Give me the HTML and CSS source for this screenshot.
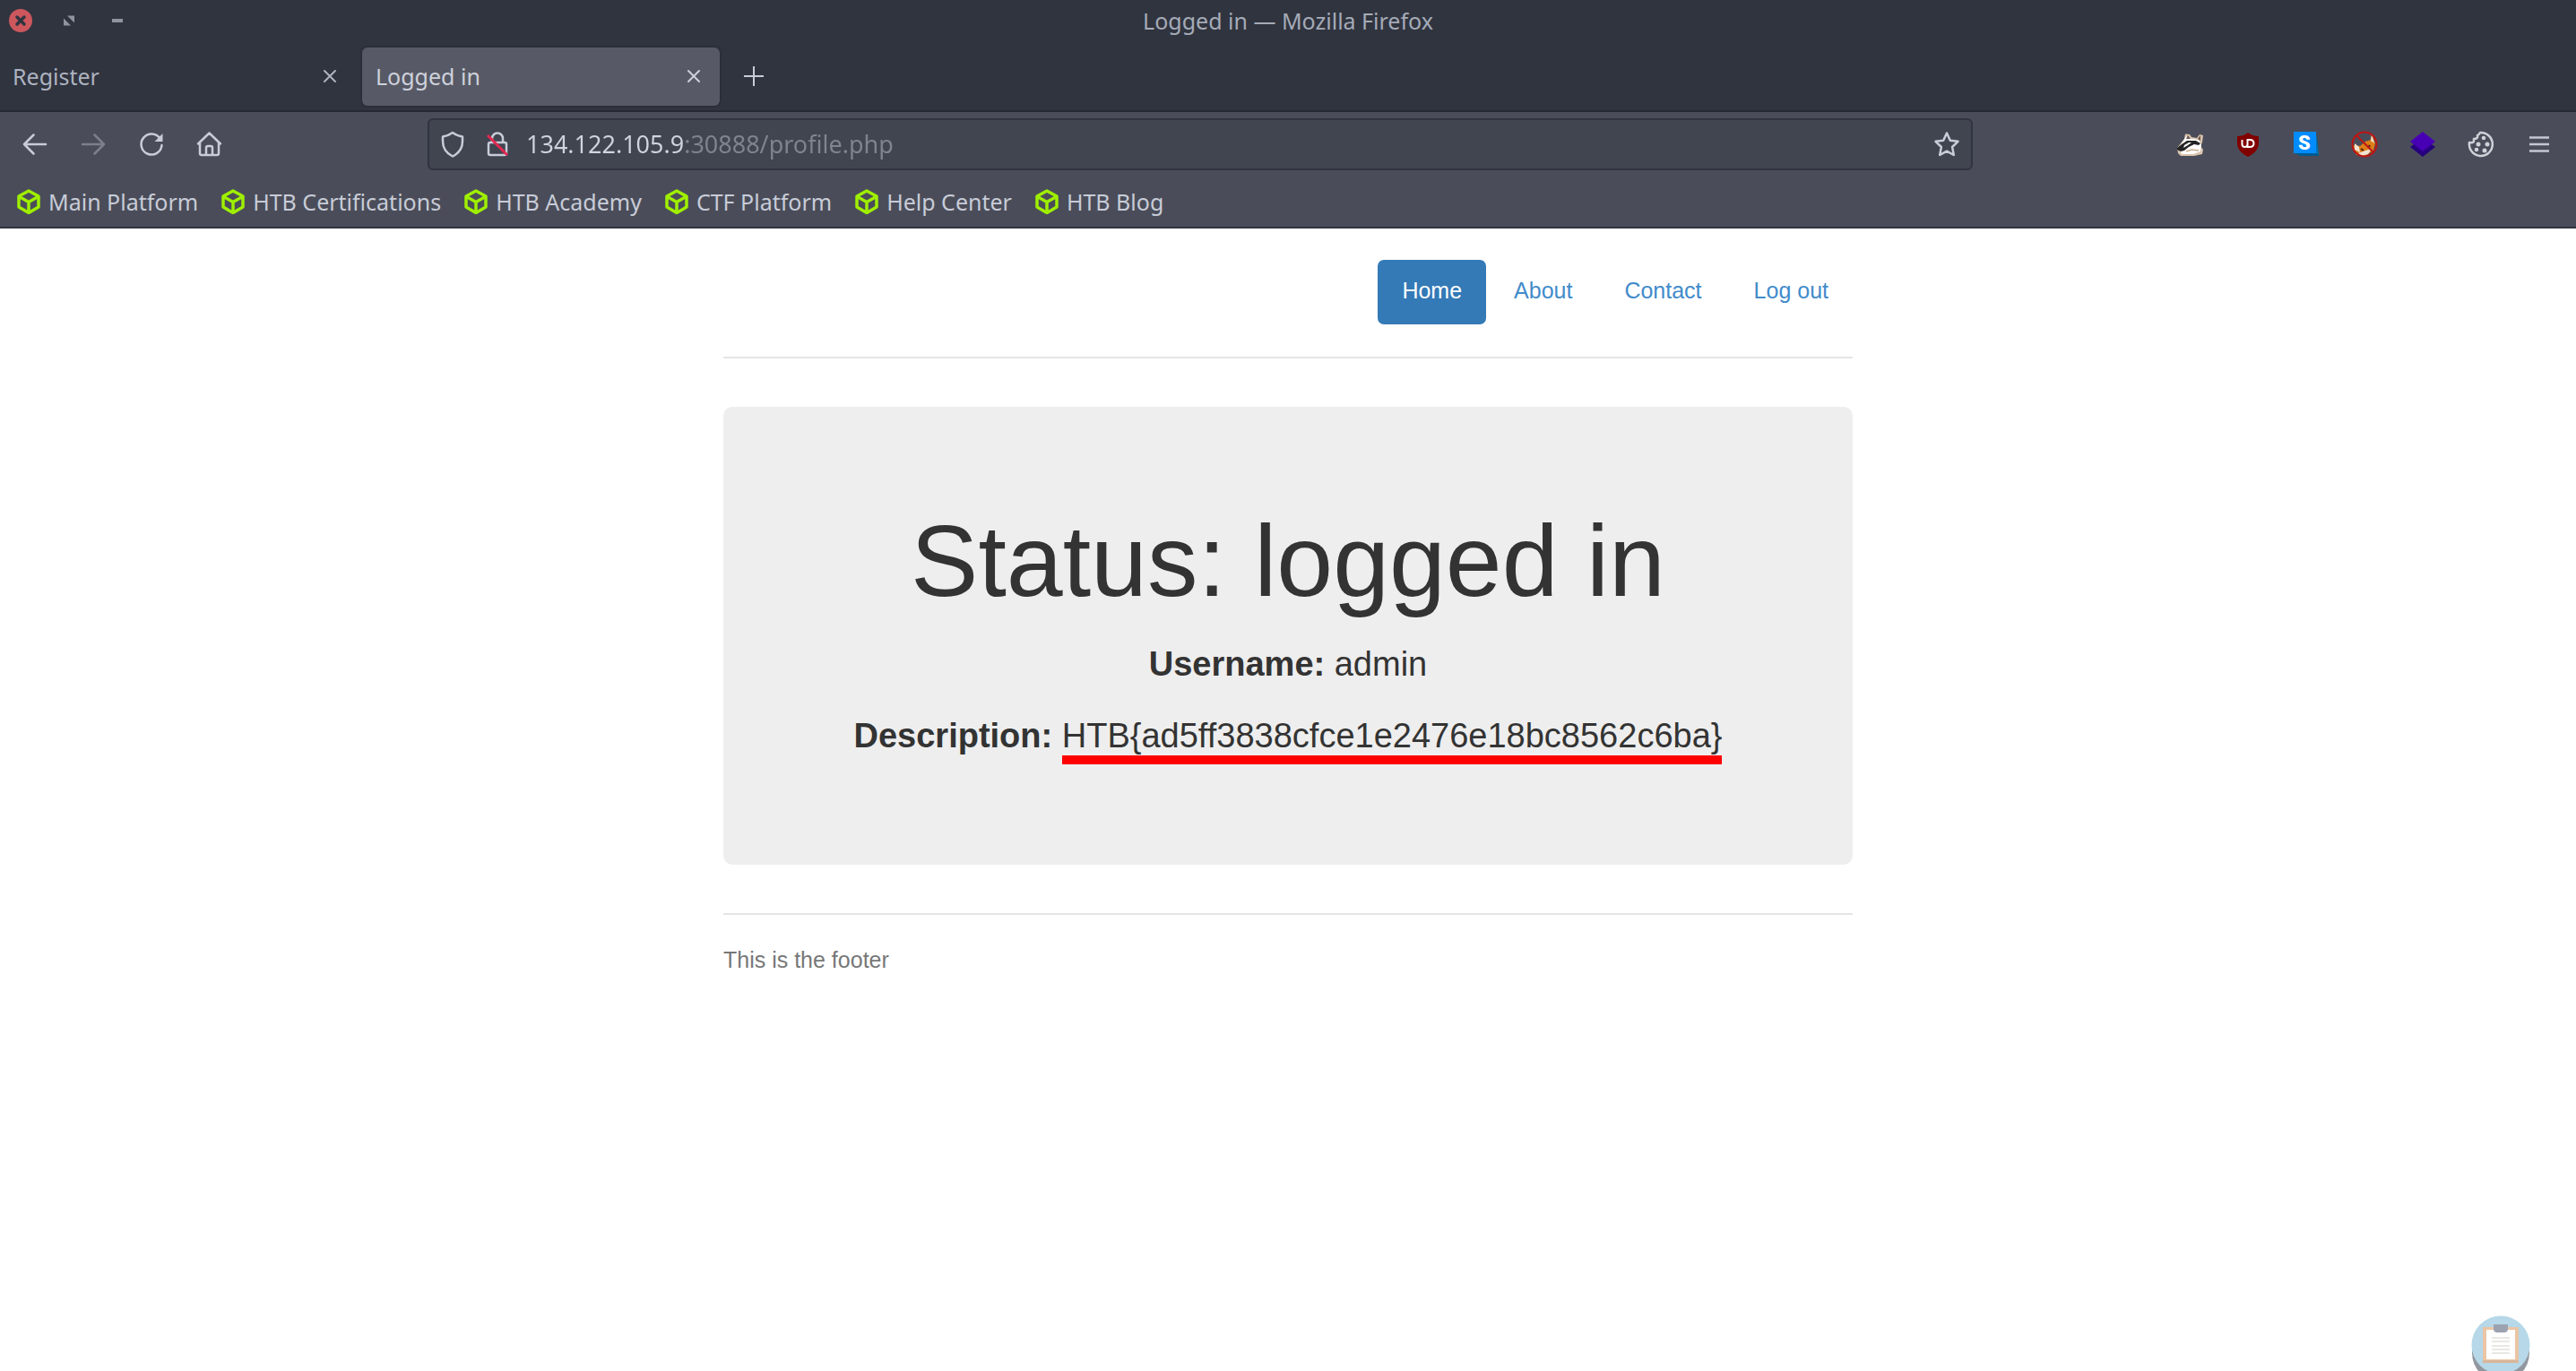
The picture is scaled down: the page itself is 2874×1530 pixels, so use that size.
FILE: index.html
```html
<!DOCTYPE html>
<html lang="en">
<head>
<meta charset="utf-8">
<title>Logged in</title>
<link rel="stylesheet" href="styles.css">
</head>
<body>
<svg width="0" height="0" class="defs" aria-hidden="true">
  <symbol id="cube" viewBox="0 0 26 28"><path d="M13 2 24 8v12l-11 6.500L2 20V8zM2.500 8.500 13 14.500l10.500-6M13 14.500V26" fill="none" stroke="#9fef00" stroke-width="3.500" stroke-linejoin="round"/></symbol>
  <symbol id="close" viewBox="0 0 16 16"><path d="M2 2l12 12M14 2 2 14" fill="none" stroke="currentColor" stroke-width="2" stroke-linecap="round"/></symbol>
</svg>
<header class="browser">
  <div class="titlebar">
    <div class="controls">
      <button aria-label="Close window"><svg width="26" height="26"><circle cx="13" cy="13" r="13" fill="#cc575d"/><path d="M9 9l8 8M17 9l-8 8" stroke="#2f343f" stroke-width="3.500" stroke-linecap="round"/></svg></button>
      <button aria-label="Restore window"><svg width="26" height="26"><path d="M11 7.500h8v8zM7 10.500v8h8z" fill="#90949e"/></svg></button>
      <button aria-label="Minimize window"><svg width="26" height="26"><path d="M7 11h12v4H7z" fill="#90949e"/></svg></button>
    </div>
    <div class="window-title">Logged in — Mozilla Firefox</div>
  </div>
  <div class="tabs">
    <div class="tab"><button class="tab-name">Register</button><button aria-label="Close Register"><svg width="16" height="16"><use href="#close"/></svg></button></div>
    <div class="tab active"><button class="tab-name">Logged in</button><button aria-label="Close Logged in"><svg width="16" height="16"><use href="#close"/></svg></button></div>
    <button class="new-tab" aria-label="New tab"><svg width="22" height="22"><path d="M11 0v22M0 11h22" stroke="currentColor" stroke-width="2"/></svg></button>
  </div>
  <div class="toolbar">
    <div class="nav-buttons">
      <button aria-label="Back"><svg width="30" height="30"><path d="M27 15H3M13.500 4.500 3 15l10.500 10.500" class="line"/></svg></button>
      <button aria-label="Forward" disabled><svg width="30" height="30"><path d="M3 15h24M16.500 4.500 27 15 16.500 25.500" class="line"/></svg></button>
      <button aria-label="Reload"><svg width="30" height="30"><path d="M24.500 8.500A11.500 11.500 0 1 0 26.500 16" class="line"/><path d="M27.500 3v9h-9z" fill="currentColor"/></svg></button>
      <button aria-label="Home"><svg width="30" height="30"><path d="M2 14.500 14.500 2.500l12.500 12M4 12.500V25q0 2 2 2h17q2 0 2-2V12.500M11 27v-8q0-2 2-2h3q2 0 2 2v8" class="line"/></svg></button>
    </div>
    <div class="url-bar">
      <svg width="28" height="30"><path d="M14 2C10 5 6 6 3 6.500v5C3 19 7 25 14 28.500 21 25 25 19 25 11.500v-5C22 6 18 5 14 2z" class="line"/></svg>
      <svg width="28" height="30"><path d="M8 13V8.500a6 6 0 0 1 12 0V13M6 13h16q2 0 2 2v10q0 2-2 2H6q-2 0-2-2V15q0-2 2-2z" class="line"/><path d="M3 5l22 22" stroke="#e22850" stroke-width="3"/></svg>
      <input class="url" aria-label="Address" value="134.122.105.9:30888/profile.php">
      <button aria-label="Bookmark this page"><svg width="30" height="30"><path d="M15 2.500l3.800 8.200 8.700 1.100-6.400 6.200 1.700 9-7.800-4.300L7.200 27l1.700-9-6.400-6.200 8.700-1.100z" class="line"/></svg></button>
    </div>
    <div class="extensions">
      <button aria-label="Privacy Badger"><svg width="30" height="30" viewBox="0 0 30 30"><path d="M1 19 9 9 10 3.500l5 .5 2 3 6 1 3-4 4 1-1 8-2 4 3 4-1 5-9 2H5l-3-3z" fill="#d9c4ae"/><path d="M3 18l5-7 3-5 6 3 8 1 3 6-1 7-8 3H6z" fill="#fff"/><path d="M1 19l5-4 6-4 10 0 5 3-2 2-5-1-6 3-5 4-4 1-4-2z" fill="#242424"/><path d="M11 9l2-4 3 4zM24 9l3-4v6z" fill="#6b5850"/><path d="M9 16l5-3 3 0-4 3-5 3z" fill="#fff"/><path d="M11 23l6-2 8 1" fill="none" stroke="#c9ab8c" stroke-width="1.500"/></svg></button>
      <button aria-label="uBlock Origin"><svg width="30" height="30"><path d="M15 2c4 3 8 4 12 4v8c0 6-4 11-12 15C7 25 3 20 3 14V6c4 0 8-1 12-4z" fill="#800000"/><path d="M8.500 10v5q0 3 3 3t3-3v-5M14.500 10v8h2.500q4.500 0 4.500-4T17 10z" fill="none" stroke="#fff" stroke-width="2"/></svg></button>
      <button aria-label="Stylus"><svg width="30" height="30"><path d="M5 26l-3-1 25-1V2l2 26H8z" fill="#00598f"/><path d="M26 3l3 24-3-3z" fill="#0072b5"/><path d="M1 1h25v24H1z" fill="#008cff"/><text x="13" y="21" class="s-mark">S</text></svg></button>
      <button aria-label="FoxyProxy"><svg width="30" height="30"><path d="M23 3l4 11-2 8-9 6-10-1-4-11 8 1 6-5 6-2z" fill="#dc7e18"/><path d="M4 14l5 4 1 6-6-3zM23 4l3 10-4-3zM8 25l8-3 7-2-4 6-7 2z" fill="#f2e4d2"/><path d="M11 20l3 2M20 16l1 2" stroke="#55210c" stroke-width="2"/><circle cx="15" cy="15" r="13.500" fill="none" stroke="#be1515" stroke-width="2"/><path d="M6 5l19 19" stroke="#be1515" stroke-width="2"/></svg></button>
      <button aria-label="Layers"><svg width="30" height="30"><path d="M15 8l14 10-14 11L1 18z" fill="#26007d"/><path d="M15 1l14 11-14 11L1 12z" fill="#4800b4"/></svg></button>
      <button aria-label="Cookie Editor"><svg width="30" height="30"><path d="M14 2a13 13 0 1 1-12 11q3 1 5-1V9q5 0 4-4 2-1 3-3z" fill="none" stroke="#ced1d8" stroke-width="2.500" stroke-linejoin="round"/><g fill="#ced1d8"><circle cx="18" cy="8" r="2.300"/><circle cx="12" cy="15" r="2.500"/><circle cx="22" cy="15" r="2.500"/><circle cx="10" cy="21" r="2.300"/><circle cx="19" cy="22" r="2.500"/></g></svg></button>
      <button aria-label="Menu"><svg width="30" height="30"><path d="M4 7.500h22M4 15h22M4 22.500h22" stroke="#c3c7d1" stroke-width="2.500"/></svg></button>
    </div>
  </div>
  <nav class="bookmarks" aria-label="Bookmarks">
    <a href="#"><svg width="26" height="28"><use href="#cube"/></svg>Main Platform</a>
    <a href="#"><svg width="26" height="28"><use href="#cube"/></svg>HTB Certifications</a>
    <a href="#"><svg width="26" height="28"><use href="#cube"/></svg>HTB Academy</a>
    <a href="#"><svg width="26" height="28"><use href="#cube"/></svg>CTF Platform</a>
    <a href="#"><svg width="26" height="28"><use href="#cube"/></svg>Help Center</a>
    <a href="#"><svg width="26" height="28"><use href="#cube"/></svg>HTB Blog</a>
  </nav>
</header>
<div class="container">
  <nav class="site-nav" aria-label="Site">
    <a href="#" class="current">Home</a>
    <a href="#">About</a>
    <a href="#">Contact</a>
    <a href="#">Log out</a>
  </nav>
  <main class="jumbotron">
    <h1>Status: logged in</h1>
    <p><b>Username:</b> admin</p>
    <p><b>Description:</b> <span class="flag">HTB{ad5ff3838cfce1e2476e18bc8562c6ba}</span></p>
  </main>
  <footer>This is the footer</footer>
</div>
<button class="clipboard" aria-label="Clipboard"><svg width="66" height="80"><circle cx="33" cy="42" r="32" fill="#92979f"/><circle cx="33" cy="33" r="32.500" fill="#b6d8e8"/><path d="M13 13h40v40H13z" fill="#ebc5a4"/><path d="M13 50h40v3H13z" fill="#d7b79c"/><path d="M17 16h32v33H17z" fill="#fff"/><path d="M25 10h16v5q0 4-4 4h-8q-4 0-4-4z" fill="#9ca2b0"/><path d="M23 25h20M23 29h20M23 34h20M23 38h20M23 42h20" stroke="#e9e8e4" stroke-width="2"/></svg></button>
</body>
</html>
```
FILE: styles.css
```css
* { box-sizing: border-box; }
body {
  margin: 0;
  min-height: 100vh;
  overflow: hidden;
  background: #fff;
  color: #333;
  font-family: "Liberation Sans", Arial, sans-serif;
  font-size: 25px;
  line-height: 36px;
}
svg { display: block; flex: none; }
.defs { position: absolute; }
button {
  padding: 0;
  border: 0;
  background: none;
  color: inherit;
  font: inherit;
}
a { text-decoration: none; }
.line {
  fill: none;
  stroke: currentColor;
  stroke-width: 2.5;
  stroke-linecap: round;
  stroke-linejoin: round;
}

.browser {
  border-bottom: 2px solid #30343f;
  background: #4a4d59;
  color: #c8ccd8;
  font-family: "Noto Sans", sans-serif;
  font-size: 25px;
}
.titlebar {
  display: grid;
  grid-template-columns: 1fr auto 1fr;
  align-items: center;
  height: 46px;
  padding: 0 10px;
  background: #30343f;
  color: #a5abb7;
}
.controls { display: flex; gap: 28px; }
.tabs {
  display: flex;
  align-items: center;
  height: 79px;
  padding-top: 1px;
  border-bottom: 2px solid #262933;
  background: #30343f;
}
.tab {
  display: flex;
  align-items: center;
  width: 404px;
  height: 65px;
  padding: 0 28px 0 14px;
  border-radius: 6px;
  color: #adb2bf;
}
.tab.active {
  width: 399px;
  padding: 0 21px 0 15px;
  background: #575a66;
  box-shadow: 0 0 3px #20232b;
  color: #ced1db;
}
.tab-name { flex: 1; text-align: left; }
.new-tab { margin-left: 27px; }

.toolbar {
  display: flex;
  align-items: center;
  height: 72px;
  padding: 0 26px 0 24px;
}
.nav-buttons { display: flex; gap: 35px; }
.nav-buttons :disabled { opacity: .4; }
.url-bar {
  display: flex;
  flex: 1;
  align-items: center;
  gap: 22px;
  height: 58px;
  margin: 0 227px 0 228px;
  padding: 0 12px;
  border: 2px solid #30343f;
  border-radius: 6px;
  background: #404550;
}
.url {
  flex: 1;
  min-width: 0;
  margin-left: -4px;
  padding: 0;
  border: 0;
  outline: 0;
  background: linear-gradient(to right, #d0d4de 178px, #7f848f 178px);
  background-clip: text;
  color: #d0d4de;
  -webkit-text-fill-color: transparent;
  font: inherit;
  font-size: 27px;
}
.extensions { display: flex; gap: 35px; }
.s-mark {
  fill: #fff;
  font: 900 22px Roboto, sans-serif;
  text-anchor: middle;
}
.bookmarks {
  display: flex;
  gap: 26px;
  height: 56px;
  padding: 9px 19px;
}
.bookmarks a {
  display: flex;
  align-items: center;
  gap: 9px;
  color: #c8ccd8;
}

.container { width: 1260px; max-width: 100%; margin: 0 auto; }
.site-nav {
  display: flex;
  justify-content: flex-end;
  gap: 4px;
  padding: 35px 0 36px;
  border-bottom: 2px solid #e5e5e5;
}
.site-nav a {
  padding: 16px 27px 20px;
  border-radius: 7px;
  color: #428bca;
}
.site-nav .current { background: #337ab7; color: #fff; }
.jumbotron {
  margin: 54px 0;
  padding: 110px 27px 90px;
  border-radius: 10px;
  background: #eee;
  font-size: 38px;
  line-height: 53px;
  text-align: center;
}
h1 {
  margin: 0 0 27px;
  font-size: 113px;
  font-weight: 400;
  line-height: 124px;
}
p { margin: 0 0 27px; }
.flag {
  padding-bottom: 1px;
  border-bottom: 10px solid #f00;
}
footer {
  padding-top: 32px;
  border-top: 2px solid #e5e5e5;
  color: #777;
}
.clipboard { position: fixed; right: 51px; bottom: -18px; }
```
